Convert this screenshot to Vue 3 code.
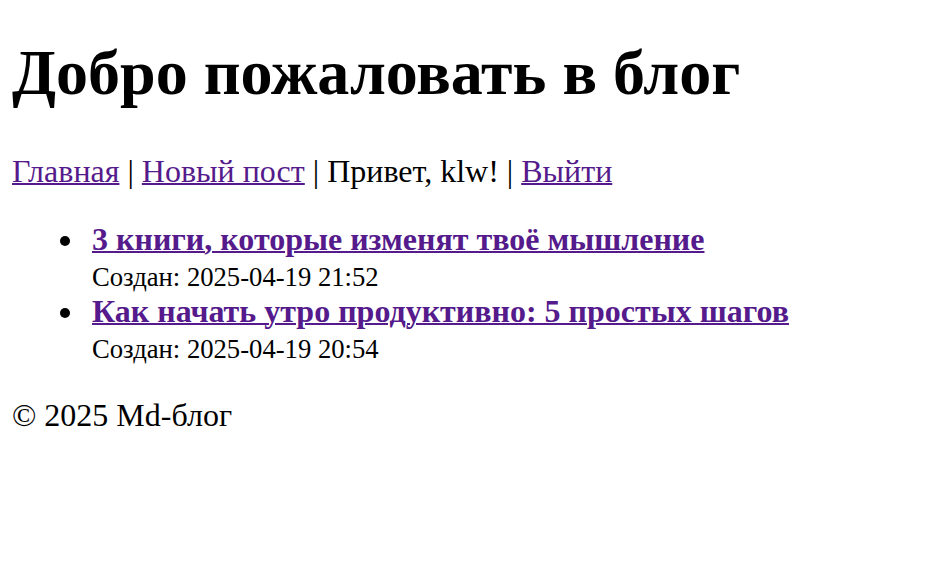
<script setup>
const posts = [
  { title: '3 книги, которые изменят твоё мышление', created: '2025-04-19 21:52' },
  { title: 'Как начать утро продуктивно: 5 простых шагов', created: '2025-04-19 20:54' },
]
</script>

<template>
  <div class="page">
    <header>
      <h1>Добро пожаловать в блог</h1>
      <nav>
        <a href="#">Главная</a> | <a href="#">Новый пост</a> | Привет, klw! | <a href="#">Выйти</a>
      </nav>
    </header>
    <main>
      <ul>
        <li v-for="post in posts" :key="post.title">
          <div>
            <a href="#"><strong>{{ post.title }}</strong></a><br>
            <small>Создан: {{ post.created }}</small>
          </div>
        </li>
      </ul>
    </main>
    <footer>© 2025 Md-блог</footer>
  </div>
</template>

<style>
body {
  margin: 0;
  background: #fff;
}
</style>

<style scoped>
.page {
  padding: 35px 12px;
  font-family: "Liberation Serif", "Times New Roman", serif;
  font-size: 32px;
  line-height: 36px;
  color: #000;
}

h1 {
  margin: 0 0 42px;
  font-size: 64px;
  line-height: 76px;
  font-weight: bold;
}

a {
  color: #551a8b;
  text-decoration: underline;
  text-decoration-thickness: 2px;
}

ul {
  margin: 32px 0;
  padding-left: 48px;
  list-style: none;
}

li {
  display: flex;
  gap: 22px;
}

li::before {
  content: "";
  flex: none;
  width: 10px;
  height: 10px;
  margin-top: 15px;
  border-radius: 50%;
  background: #000;
}

small {
  font-size: smaller;
  line-height: 28px;
}
</style>
